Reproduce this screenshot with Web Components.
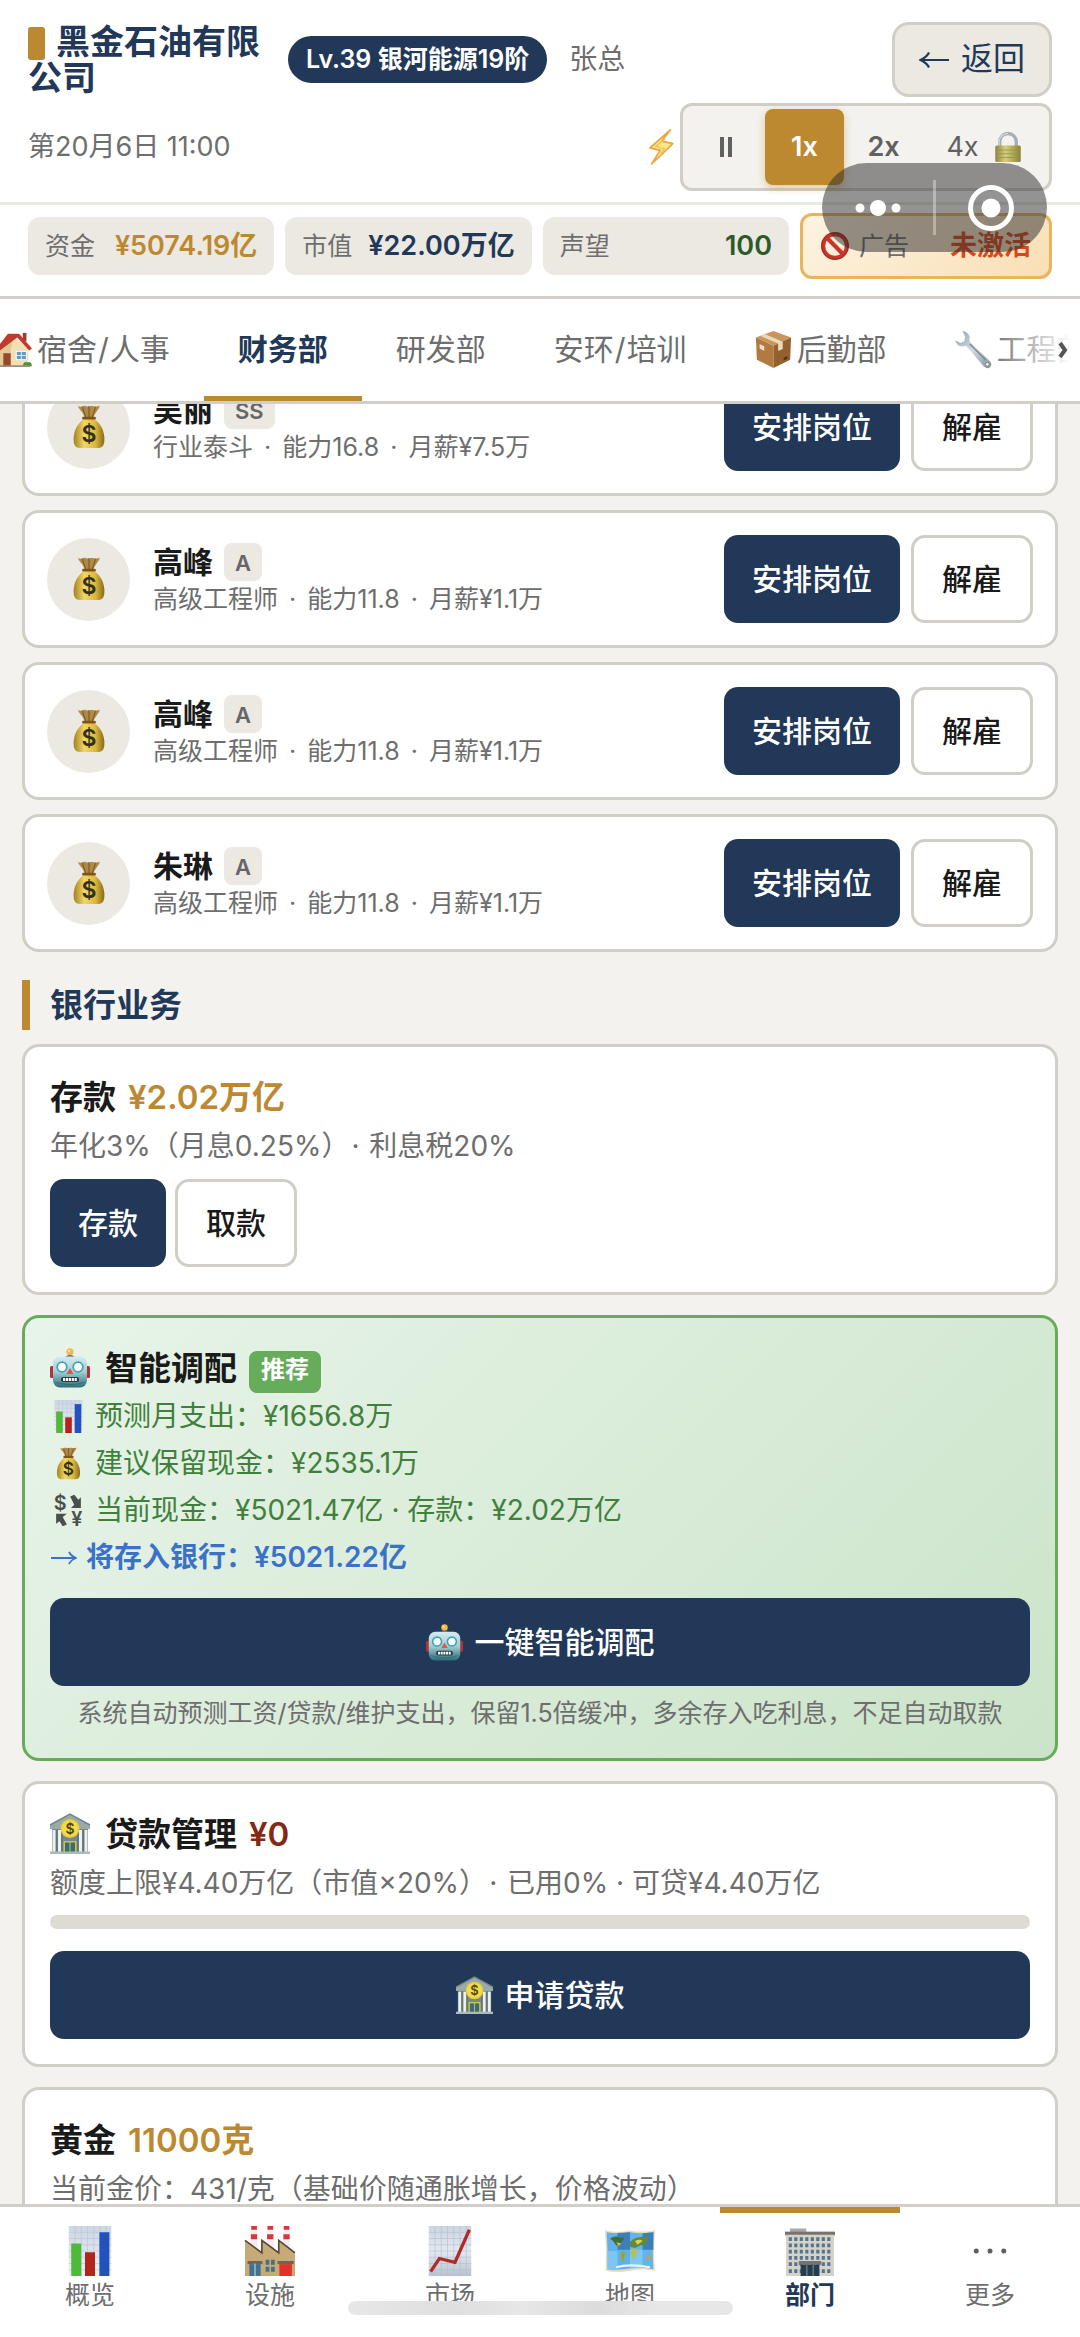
<!DOCTYPE html>
<html lang="zh-CN">
<head>
<meta charset="utf-8">
<meta name="viewport" content="width=device-width, initial-scale=1">
<title>黑金石油有限公司</title>
<style>
  :root {
    --navy: #223858;
    --gold: #bd8930;
    --ink: #1a1a1a;
    --muted: #6e6e6e;
    --line: #d0cec7;
    --sand: #ebe9e2;
    --paper: #f4f2ee;
  }
  * { box-sizing: border-box; }
  html, body { height: 100%; }
  body {
    margin: 0;
    background: var(--paper);
    color: var(--ink);
    font-family: Inter, "Noto Sans CJK SC", sans-serif;
    font-size: 28px;
    line-height: 1.4;
    text-spacing-trim: space-all;
  }
</style>
</head>
<body>
<game-app></game-app>

<script>
const base = '<style>*{box-sizing:border-box}button{font:inherit;color:inherit;cursor:pointer;margin:0}p,h1,h2,h3{margin:0;font-weight:inherit;font-size:inherit}.sep{margin:0 4px}</style>';

function define(name, html, setup) {
  const template = document.createElement('template');
  template.innerHTML = base + html;
  customElements.define(name, class extends HTMLElement {
    connectedCallback() {
      if (this.shadowRoot) return;
      this.attachShadow({ mode: 'open' }).append(template.content.cloneNode(true));
      if (setup) setup(this, this.shadowRoot);
    }
  });
}

/* ---------- pictograms, all on a 40 x 40 grid ---------- */
const icons = {
  bag: `<defs><linearGradient id="g"><stop offset="0" stop-color="#a5811f"/><stop offset=".35" stop-color="#f0d766"/><stop offset=".7" stop-color="#dcb93f"/><stop offset="1" stop-color="#8c6a18"/></linearGradient></defs>
    <path d="M10 1c3 2 4-1 7 0s4 0 6 0 5 1 7-.5c-1 4-5 7-6 11h-8c-1-5-5-7-6-10.5z" fill="#b08a45"/><path d="M14 2l3 9M20 1v10M26 2l-3 9" stroke="#7a5a22" stroke-width="1"/>
    <path d="M16 12h8c7 5 10 12 10 19 0 6-2 8-5 8H11c-3 0-5-2-5-8 0-7 3-14 10-19z" fill="url(#g)"/><path d="M15 12h10" stroke="#7b551c" stroke-width="2.5" stroke-linecap="round"/>
    <text x="20" y="34" text-anchor="middle" font-family="Inter,sans-serif" font-size="21" font-weight="600" fill="#33301c">$</text>`,
  robot: `<defs><linearGradient id="g" x2="0" y2="1"><stop offset="0" stop-color="#d5ecef"/><stop offset=".5" stop-color="#a2cdd2"/><stop offset="1" stop-color="#2c6b78"/></linearGradient></defs>
    <rect x="0" y="18" width="4" height="12" rx="1.5" fill="#b4303a"/><rect x="36" y="18" width="4" height="12" rx="1.5" fill="#b4303a"/>
    <path d="M15 9q5-4 10 0z" fill="#5b4a8a"/><circle cx="20" cy="3.8" r="3.5" fill="#f1b845"/><circle cx="19" cy="3" r="1.2" fill="#fce7a2"/>
    <rect x="3" y="8.5" width="34" height="31" rx="7" fill="url(#g)"/><path d="M5 34q15 5 30 0" stroke="#205461" stroke-width="1" fill="none" opacity=".5"/>
    <circle cx="12" cy="19" r="4.8" fill="#fff" stroke="#3da5b8" stroke-width="1.8"/><circle cx="28" cy="19" r="4.8" fill="#fff" stroke="#3da5b8" stroke-width="1.8"/>
    <path d="M20 20l3.5 6h-7z" fill="#e2574c"/><rect x="11" y="29" width="18" height="5" rx="2" fill="#273b42"/><path d="M13 31.5h14" stroke="#fff" stroke-width="3" stroke-dasharray="2.2 .7"/>`,
  bars: `<defs><linearGradient id="g" x2="0" y2="1"><stop offset="0" stop-color="#cdd6e3"/><stop offset="1" stop-color="#eef1f6"/></linearGradient></defs>
    <rect x="3" y="0" width="34" height="40" fill="url(#g)"/><path d="M3 5h34M3 10h34M3 15h34M3 20h34M3 25h34M3 30h34M3 35h34M8 0v40M13 0v40M18 0v40M23 0v40M28 0v40M33 0v40" stroke="#b9c4d4" stroke-width=".5"/>
    <rect x="5" y="14" width="8" height="26" fill="#4fb93a"/><rect x="16" y="21" width="8" height="19" fill="#b3241c"/><rect x="27.5" y="5" width="8" height="35" fill="#2352bd"/>`,
  trend: `<defs><linearGradient id="g" x2="0" y2="1"><stop offset="0" stop-color="#cbd5e0"/><stop offset=".5" stop-color="#e3e9f0"/><stop offset="1" stop-color="#b9c3d0"/></linearGradient></defs>
    <rect x="3" y="0" width="34" height="40" fill="url(#g)"/><path d="M3 5h34M3 10h34M3 15h34M3 20h34M3 25h34M3 30h34M3 35h34M8 0v40M13 0v40M18 0v40M23 0v40M28 0v40M33 0v40" stroke="#b3bfce" stroke-width=".5"/>
    <path d="M4.5 36.5L11.5 26l12.5 3L35.5 3" fill="none" stroke="#b02a26" stroke-width="2.6"/>`,
  factory: `<path d="M5 0h4.500l.8 20H4.200zM18 0h4.500l.8 20h-6.100zM31 0h4.500l.8 20h-6.100z" fill="#f3ecec"/>
    <path d="M5 0h4.500v3H5zM4.700 6.500h5v4h-5zM18 0h4.500v3H18zM17.700 6.500h5v4h-5zM31 0h4.500v3H31zM30.700 6.500h5v4h-5z" fill="#d8353c"/>
    <path d="M0 11l13.500 10V11L27 21V11l13 10v19H0z" fill="#c7aa76"/><path d="M0 11.500l13.500 10V11.500l13.500 10v-10l13 10" fill="none" stroke="#5a4636" stroke-width="1.3"/>
    <rect x="2" y="28" width="12" height="2.5" fill="#6d6657"/><rect x="3.5" y="30.5" width="9" height="9.5" fill="#3e7192"/><path d="M8 30v10" stroke="#b9cbd2" stroke-width="1"/>
    <path d="M16.500 27h3v4h-3zM20.800 27h3v4h-3zM16.500 32.500h3v4h-3zM20.800 32.500h3v4h-3z" fill="#43718c"/><rect x="26" y="28" width="13" height="2.5" fill="#6d6657"/><rect x="27.5" y="30.5" width="10" height="9.5" fill="#e0312b"/>`,
  map: `<path d="M0 3.500q10 2 20 0 10 2 20-.2-1.500 18 0 32.500-10-2.500-20 0-10 2-19.500 0Q1.500 20 0 3.500z" fill="#eed9bd"/>
    <path d="M1.300 5q9 1.500 18.700 0v29q-9.500 1.500-18 .5Q2.500 20 1.300 5z" fill="#5fb1e8"/><path d="M20 5q10 1.500 18.700 0-1 15 0 29.500-9.500-2-18.700-.5z" fill="#64b4ea"/>
    <path d="M10 5.500l10-.5v14H10zM30 5.800L38.700 5v14H30z" fill="#3d7fb8"/><path d="M1.500 20H10v14.500H2zM20 19h10v14.500l-10 .5z" fill="#85cbf5" opacity=".8"/>
    <path d="M4 10q5-3 8-.5 4-1 3 1-2 2-3 4l-3 1-2-3z" fill="#3f6d3f"/><path d="M9 13l4 1-2 2z" fill="#d3c637"/><path d="M13 20l3.500 1.500-1 4-1.500 4-1.500-5z" fill="#8faa3c"/>
    <path d="M20 13q3-4 8-4 6-2 7 2l-4 4-3 .5-4 2-4-1z" fill="#608b3c"/><path d="M24 12q4-2 6 0l-4 3z" fill="#ddd35a"/><path d="M21 18l5 .5-2 6-1.500 2-1.500-4z" fill="#b9c04c"/><path d="M33 24l3.500.5v2.500l-3-.5z" fill="#d69b45"/><path d="M9 33q10-3 27 0" stroke="#e8f4f9" stroke-width="1.8" fill="none"/>`,
  office: `<rect x="4" y="2" width="13" height="3" fill="#aaa"/><rect x="0" y="4.5" width="40" height="3" fill="#77736e"/><rect x=".8" y="7" width="38.4" height="33" fill="#d5d2ca"/>
    <path d="M3 10.500h34M3 15.500h34M3 20.500h34M3 25.500h34M3 30.500h34M3 36h34" stroke="#53738f" stroke-width="3" stroke-dasharray="2.5 1.9"/>
    <rect x="11" y="28" width="18" height="3" fill="#77736c"/><rect x="12.5" y="31" width="15" height="9" fill="#263d4e"/><path d="M17.500 31v9M22.500 31v9" stroke="#8194a0" stroke-width=".8"/>`,
  bank: `<path d="M0 15v-4L20 0l20 11v4z" fill="#9ba9a9"/><path d="M0 11L20 0l20 11" fill="none" stroke="#74858a" stroke-width="1.5"/><rect x="2" y="15" width="36" height="23" fill="#75888b"/>
    <path d="M4 16v22M9.500 16v22M30.500 16v22M36 16v22" stroke="#eef0ef" stroke-width="3"/><path d="M6.800 16v22M12 16v22M28 16v22M33.300 16v22" stroke="#5d7175" stroke-width="1.2"/>
    <rect x="13.5" y="27" width="13" height="12" fill="#d2c246"/><rect x="15" y="28.5" width="10" height="10" fill="#386b7d"/><path d="M20 28v11" stroke="#d2c246" stroke-width="1"/><rect x="0" y="37.5" width="40" height="2.5" fill="#aeb9b9"/>
    <circle cx="20" cy="14.5" r="9.5" fill="#e9cd35"/><circle cx="20" cy="14.5" r="8" fill="#f3dc4b"/><text x="20" y="19.5" text-anchor="middle" font-family="Inter,sans-serif" font-size="14" font-weight="600" fill="#54480f">$</text>`,
  exchange: `<g fill="#4a4f4c" font-family="Inter,sans-serif" font-weight="600" font-size="24" text-anchor="middle"><text x="10" y="19">$</text><text x="30" y="39">¥</text></g>
    <path d="M22 3l5-2 5 6 3-3v13H23l4-4z" fill="#4a4f4c"/><path d="M18 37l-5 2-4-6-4 3V24h13l-5 4z" fill="#4a4f4c"/>`,
  house: `<path d="M30 2h4v9h-4z" fill="#9b4031"/><path d="M4 19L20 5l16 14v19H4z" fill="#f3dfb3"/><path d="M20 6l-10 12-8 2v18h15V20z" fill="#e3c794"/><path d="M0 21L14 3h12l14 16-3 2L24 7 3 23z" fill="#bf3a2f"/>
    <rect x="9" y="24" width="8" height="14" fill="#97492e"/><rect x="23" y="22" width="11" height="9" fill="#5ba0cf" stroke="#fff" stroke-width="1"/><path d="M28.500 22v9M23 26.500h11" stroke="#fff" stroke-width=".8"/><path d="M30 38q1-6 5-4 4-2 5 4z" fill="#4f9138"/><path d="M2 38h36" stroke="#99917d" stroke-width="2"/>`,
  box: `<path d="M20 0l19 7-19 9L1 7z" fill="#c9955a"/><path d="M1 7l19 9v24L2 31z" fill="#b27a40"/><path d="M39 7l-19 9v24l18-9z" fill="#93602e"/><path d="M11 3.500L30 11.500v8l-5 2v-8L6 5.500z" fill="#ead9bd"/><path d="M5 14l5 2.500v5L5 19z" fill="#e6e0d6"/><path d="M31 29l4-2v3l-4 2z" fill="#4c3520"/>`,
  wrench: `<defs><linearGradient id="g" x2="1" y2="1"><stop offset="0" stop-color="#8da0ae"/><stop offset=".5" stop-color="#d3dbe0"/><stop offset="1" stop-color="#7d8e99"/></linearGradient></defs>
    <path d="M8 0q7 1 8 7-.5 3 0 5l21 20q4 4 1 7t-7-1L12 16q-9 3-12-6l6 3 4-2 1-5z" fill="url(#g)"/><path d="M16 14l17 17" stroke="#778893" stroke-width="1.5"/><circle cx="35" cy="36" r="2" fill="#fff" stroke="#71808a"/>`,
  ban: `<circle cx="20" cy="20" r="17" fill="none" stroke="#c8362b" stroke-width="6"/><path d="M8 8l24 24" stroke="#c8362b" stroke-width="6"/><circle cx="20" cy="20" r="19" fill="none" stroke="#8f2118" stroke-width="1"/>`,
  bolt: `<path d="M31 0L7 21l12 3L9 40l25-24-13-3z" fill="#fbe68b" stroke="#eda640" stroke-width="2" stroke-linejoin="round"/><path d="M25 10L14 19l10 3-6 9" fill="none" stroke="#f5c14f" stroke-width="1.5"/>`,
  lock: `<defs><linearGradient id="g"><stop offset="0" stop-color="#8b8640"/><stop offset=".4" stop-color="#d4ce7e"/><stop offset="1" stop-color="#8b8234"/></linearGradient></defs>
    <path d="M9 20v-7a11 11 0 0122 0v7" fill="none" stroke="#a7aeb6" stroke-width="4.5"/><path d="M8 19v-6a12 12 0 0112-11" fill="none" stroke="#dce1e6" stroke-width="1.5"/><rect x="3" y="18" width="34" height="22" rx="2" fill="url(#g)"/><path d="M4 24h32M4 29h32M4 34h32" stroke="#969047" stroke-width="1"/>`,
  dots: `<g fill="#5f5f5f"><circle cx="9" cy="20" r="2"/><circle cx="20" cy="20" r="2"/><circle cx="31" cy="20" r="2"/></g>`
};
define('emoji-icon', `<style>
  :host { display: inline-block; flex: none; width: var(--icon, 32px); height: var(--icon, 32px); vertical-align: middle; }
  svg { display: block; width: 100%; height: 100%; overflow: visible; }
</style><svg viewBox="0 0 40 40" aria-hidden="true"></svg>`, (el, root) => {
  root.querySelector('svg').innerHTML = icons[el.getAttribute('name')] || '';
});

/* ---------- button ---------- */
define('ui-button', `<style>
  :host { display: inline-flex; }
  :host([wide]) { display: flex; }
  button { display: flex; align-items: center; justify-content: center; gap: 12px; width: 100%; height: 88px; padding: 0 28px; border: 0; border-radius: 14px;
    background: var(--navy); color: #fff; font-size: 30px; font-weight: 500; line-height: 42px; white-space: nowrap; }
  :host([plain]) button { background: #fff; color: var(--ink); border: 3px solid var(--line); }
</style><button type="button"><slot></slot></button>`);

/* ---------- header ---------- */
define('speed-control', `<style>
  :host { display: flex; align-items: center; gap: 2px; }
  emoji-icon { --icon: 34px; }
  .group { display: flex; align-items: stretch; height: 88px; padding: 3px; border: 3px solid var(--line); border-radius: 12px; background: var(--paper); }
  button { display: flex; align-items: center; justify-content: center; gap: 14px; width: 79px; border: 0; border-radius: 8px; background: none; color: #606060; font-size: 27px; font-weight: 600; padding: 0; }
  button[aria-pressed=true] { background: var(--gold); color: #fff; box-shadow: 0 3px 8px rgba(189,137,48,.4); }
  button.locked { width: 123px; font-weight: 400; }
  button.locked emoji-icon { --icon: 30px; }
  .pause { display: flex; gap: 4px; }
  .pause::before, .pause::after { content: ""; width: 4px; height: 20px; background: #606060; }
</style>
<emoji-icon name="bolt"></emoji-icon>
<div class="group" role="group" aria-label="速度">
  <button type="button" aria-label="暂停"><span class="pause"></span></button>
  <button type="button" aria-pressed="true">1x</button>
  <button type="button">2x</button>
  <button type="button" class="locked">4x<emoji-icon name="lock"></emoji-icon></button>
</div>`);

define('stat-pill', `<style>
  :host { display: flex; align-items: center; justify-content: space-between; gap: 8px; height: 58px; padding: 0 17px; border-radius: 12px; background: var(--sand);
    font-size: 25px; white-space: nowrap; color: var(--navy); }
  :host([tone=gold]) { color: var(--gold); }
  :host([tone=green]) { color: #2d5a27; }
  :host([tone=alert]) { height: 66px; padding: 0 18px; border: 3px solid #eab45f; background: linear-gradient(135deg, #fdf3e2, #f9dfb4); color: #d9481c; }
  .label { display: flex; align-items: center; gap: 10px; color: var(--muted); }
  b { font-size: 27px; font-weight: 600; }
</style><span class="label"><slot name="label"></slot></span><b><slot></slot></b>`);

define('app-header', `<style>
  :host { display: block; background: #fff; }
  .top { padding: 22px 28px 11px; border-bottom: 3px solid #e9e8e2; display: grid; gap: 6px; }
  .row { display: flex; align-items: center; justify-content: space-between; }
  .who { display: flex; align-items: center; flex: 1; min-width: 0; }
  h1 { flex: 0 1 249px; font-size: 34px; line-height: 36px; font-weight: 700; color: var(--navy); margin-right: 11px; }
  .mark { display: inline-block; width: 17px; height: 33px; border-radius: 3px; background: var(--gold); vertical-align: -6px; margin-right: 11px; }
  .level { height: 47px; padding: 0 18px; border-radius: 24px; background: var(--navy); color: #fff; font-size: 25px; line-height: 46px; font-weight: 600; white-space: nowrap; }
  .user { margin-left: 22px; color: var(--muted); }
  .back { display: flex; align-items: center; gap: 12px; height: 75px; padding: 0 24px; border: 3px solid var(--line); border-radius: 17px; background: var(--sand); color: var(--navy); font-size: 32px; }
  .back svg { width: 30px; height: 18px; }
  time { color: var(--muted); font-size: 27px; }
  .stats { display: grid; grid-template-columns: repeat(3, 1fr) auto; align-items: center; gap: 11px; padding: 8px 28px 17px; border-bottom: 3px solid var(--line); }
  stat-pill[tone=alert] { min-width: 252px; }
  emoji-icon { --icon: 28px; }
</style>
<div class="top">
  <div class="row">
    <div class="who">
      <h1><span class="mark"></span>黑金石油有限公司</h1>
      <span class="level">Lv.39 银河能源19阶</span>
      <span class="user">张总</span>
    </div>
    <button class="back" type="button"><svg viewBox="0 0 30 18" fill="none" stroke="currentColor" stroke-width="2.2"><path d="M30 9H2M10 1.500Q8 6 1.500 9 8 12 10 16.500"/></svg>返回</button>
  </div>
  <div class="row">
    <time>第20月6日 11:00</time>
    <speed-control></speed-control>
  </div>
</div>
<div class="stats">
  <stat-pill tone="gold"><span slot="label">资金</span>¥5074.19亿</stat-pill>
  <stat-pill><span slot="label">市值</span>¥22.00万亿</stat-pill>
  <stat-pill tone="green"><span slot="label">声望</span>100</stat-pill>
  <stat-pill tone="alert"><emoji-icon slot="label" name="ban"></emoji-icon><span slot="label">广告</span>未激活</stat-pill>
</div>`);

/* ---------- floating capsule of the host app ---------- */
define('host-capsule', `<style>
  :host { position: absolute; z-index: 3; top: 163px; right: 33px; display: block; width: 225px; height: 89px; border-radius: 45px; background: rgba(40,40,40,.5); }
  svg { display: block; width: 100%; height: 100%; }
</style><svg viewBox="0 0 225 89" role="img" aria-label="菜单">
  <g fill="#fff"><circle cx="38" cy="45" r="4.5"/><circle cx="56" cy="45" r="8"/><circle cx="74" cy="45" r="4.5"/><circle cx="169" cy="45" r="9.5"/></g>
  <path d="M112.500 17v55" stroke="#fff" stroke-opacity=".35" stroke-width="3"/><circle cx="169" cy="45" r="20.5" fill="none" stroke="#fff" stroke-width="5"/></svg>`);

/* ---------- department tabs ---------- */
define('dept-tabs', `<style>
  :host { display: block; position: relative; background: #fff; border-bottom: 3px solid var(--line); }
  nav { display: flex; overflow-x: auto; scrollbar-width: none; }
  button { display: flex; align-items: center; flex: none; gap: 5px; height: 102px; padding: 3px 34px 0; border: 0; border-bottom: 5px solid transparent; background: none; font-size: 30px; line-height: 42px; color: var(--muted); white-space: nowrap; }
  button[aria-current] { color: var(--navy); font-weight: 700; border-color: var(--gold); }
  emoji-icon { --icon: 37px; }
  .slash { margin: 0 1px; }
  .more { position: absolute; inset: 0 0 0 auto; width: 90px; display: flex; align-items: center; justify-content: flex-end; padding-right: 12px; pointer-events: none;
    background: linear-gradient(90deg, rgba(255,255,255,0), #fff 90%); }
</style>
<nav>
  <button type="button"><emoji-icon name="house"></emoji-icon><span>宿舍<span class="slash">/</span>人事</span></button>
  <button type="button" aria-current="page">财务部</button>
  <button type="button">研发部</button>
  <button type="button"><span>安环<span class="slash">/</span>培训</span></button>
  <button type="button"><emoji-icon name="box"></emoji-icon>后勤部</button>
  <button type="button"><emoji-icon name="wrench"></emoji-icon>工程部</button>
</nav>
<span class="more"><svg width="10" height="16" viewBox="0 0 10 16"><path d="M2 1l5 7-5 7" fill="none" stroke="#555" stroke-width="4"/></svg></span>`, (el, root) => {
  const nav = root.querySelector('nav');
  requestAnimationFrame(() => { nav.scrollLeft = nav.children[1].offsetLeft - 204; });
});

/* ---------- staff ---------- */
define('staff-card', `<style>
  :host { display: flex; align-items: center; gap: 11px; height: 138px; padding: 0 22px; border: 3px solid var(--line); border-radius: 17px; background: #fff; }
  .face { display: grid; place-items: center; flex: none; width: 83px; height: 83px; margin-right: 12px; border-radius: 50%; background: var(--sand); }
  emoji-icon { --icon: 44px; }
  .info { flex: 1; min-width: 0; }
  .name { display: flex; align-items: center; gap: 11px; font-size: 30px; line-height: 40px; font-weight: 700; }
  .grade { height: 38px; padding: 0 11px; border-radius: 8px; background: var(--sand); color: #666; font-size: 22px; line-height: 40px; font-weight: 600; }
  p { font-size: 25px; line-height: 34px; color: var(--muted); }
</style>
<span class="face"><emoji-icon name="bag"></emoji-icon></span>
<div class="info"><div class="name"><slot name="name"></slot><span class="grade"><slot name="grade"></slot></span></div><p><slot></slot></p></div>
<ui-button>安排岗位</ui-button>
<ui-button plain>解雇</ui-button>`);

/* ---------- finance panels ---------- */
define('section-title', `<style>
  :host { display: block; }
  h2 { padding-left: 20px; border-left: 8px solid var(--gold); color: var(--navy); font-size: 33px; line-height: 50px; font-weight: 700; }
</style><h2><slot></slot></h2>`);

define('info-panel', `<style>
  :host { display: block; padding: 25px; border: 3px solid var(--line); border-radius: 17px; background: #fff; }
  :host([tone=green]) { border-color: #67ac5b; background: linear-gradient(135deg, #e8f4e9, #cbe4c9); }
  h3 { display: flex; align-items: center; gap: 12px; font-size: 33px; line-height: 50px; font-weight: 700; white-space: nowrap; }
</style><h3><slot name="title"></slot></h3><slot></slot>`);

define('bank-section', `<style>
  :host { display: grid; gap: 20px; }
  .amount { color: var(--gold); font-weight: 600; }
  .debt { color: #842a14; font-weight: 600; }
  p { font-size: 28px; color: var(--muted); line-height: 48px; }
  .sep { margin: 0 2px; }
  .actions { display: flex; gap: 9px; padding-top: 9px; }
  .tag { height: 42px; margin-top: 8px; padding: 0 12px; border-radius: 8px; background: #67ac5b; color: #fff; font-size: 24px; line-height: 38px; font-weight: 700; }
  emoji-icon { --icon: 40px; }
  emoji-icon[slot=title] { margin-right: 3px; }
  ui-button emoji-icon { --icon: 37px; }
  .lines { display: grid; padding-bottom: 17px; }
  .lines p { display: flex; align-items: center; gap: 10px; line-height: 47px; color: #40803c; padding-left: 2px; }
  .lines emoji-icon { --icon: 33px; }
  .lines .result { color: #3a72c9; font-weight: 600; gap: 9px; padding-left: 1px; }
  .note { font-size: 25px; line-height: 40px; text-align: center; padding-top: 7px; }
  .arrow { width: 26px; height: 14px; }
  progress { display: block; width: 100%; height: 14px; margin: 8px 0 22px; border: 0; border-radius: 7px; overflow: hidden; appearance: none; background: #dedbd5; }
  progress::-webkit-progress-bar { background: #dedbd5; }
  progress::-webkit-progress-value { background: var(--gold); }
</style>
<info-panel>
  <span slot="title">存款</span><span slot="title" class="amount">¥2.02万亿</span>
  <p>年化3%（月息0.25%）<span class="sep">·</span> 利息税20%</p>
  <div class="actions"><ui-button>存款</ui-button><ui-button plain>取款</ui-button></div>
</info-panel>
<info-panel tone="green">
  <emoji-icon slot="title" name="robot"></emoji-icon><span slot="title">智能调配</span><span slot="title" class="tag">推荐</span>
  <div class="lines">
    <p><emoji-icon name="bars"></emoji-icon>预测月支出：¥1656.8万</p>
    <p><emoji-icon name="bag"></emoji-icon>建议保留现金：¥2535.1万</p>
    <p><emoji-icon name="exchange"></emoji-icon><span>当前现金：¥5021.47亿 · 存款：¥2.02万亿</span></p>
    <p class="result"><svg class="arrow" viewBox="0 0 26 14" fill="none" stroke="currentColor" stroke-width="1.8"><path d="M0 7h24M18 1q2 4 7 6-5 2-7 6"/></svg>将存入银行：¥5021.22亿</p>
  </div>
  <ui-button wide><emoji-icon name="robot"></emoji-icon>一键智能调配</ui-button>
  <p class="note">系统自动预测工资/贷款/维护支出，保留1.5倍缓冲，多余存入吃利息，不足自动取款</p>
</info-panel>
<info-panel>
  <emoji-icon slot="title" name="bank"></emoji-icon><span slot="title">贷款管理</span><span slot="title" class="debt">¥0</span>
  <p>额度上限¥4.40万亿（市值×20%）<span class="sep">·</span> 已用0% · 可贷¥4.40万亿</p>
  <progress max="100" value="0" aria-label="已用额度"></progress>
  <ui-button wide><emoji-icon name="bank"></emoji-icon>申请贷款</ui-button>
</info-panel>
<info-panel>
  <span slot="title">黄金</span><span slot="title" class="amount">11000克</span>
  <p>当前金价：431/克（基础价随通胀增长，价格波动）</p>
  <div class="actions"><ui-button>买入</ui-button><ui-button plain>卖出</ui-button></div>
</info-panel>`);

/* ---------- bottom navigation ---------- */
define('nav-item', `<style>
  :host { display: block; flex: 1; }
  a { display: flex; flex-direction: column; align-items: center; gap: 3px; height: 100%; padding-top: 13px; border-top: 6px solid transparent; color: var(--muted); font-size: 25px; line-height: 32px; text-decoration: none; }
  :host([active]) a { border-color: var(--gold); color: var(--navy); font-weight: 700; }
  emoji-icon { --icon: 50px; }
</style><a href="#"><slot></slot></a>`, (el, root) => {
  const icon = document.createElement('emoji-icon');
  icon.setAttribute('name', el.getAttribute('icon'));
  root.querySelector('a').prepend(icon);
});

define('bottom-nav', `<style>
  :host { display: block; position: relative; background: #fff; border-top: 3px solid var(--line); }
  nav { display: flex; height: 130px; }
  .home { position: absolute; left: 50%; bottom: 22px; width: 385px; height: 14px; margin-left: -192px; border-radius: 7px; background: linear-gradient(90deg, #e7e7e7, #dfdfdf 28%, #e7e7e7 45%, #dcdcdc 65%, #e7e7e7 80%); }
</style>
<nav>
  <nav-item icon="bars">概览</nav-item>
  <nav-item icon="factory">设施</nav-item>
  <nav-item icon="trend">市场</nav-item>
  <nav-item icon="map">地图</nav-item>
  <nav-item icon="office" active>部门</nav-item>
  <nav-item icon="dots">更多</nav-item>
</nav>
<span class="home"></span>`);

/* ---------- app shell ---------- */
define('game-app', `<style>
  :host { display: flex; flex-direction: column; height: 100vh; position: relative; overflow: hidden; }
  main { flex: 1; min-height: 0; overflow-y: auto; scrollbar-width: none; padding: 0 22px 30px; }
  .staff { display: grid; gap: 14px; }
  section-title { margin: 28px 0 14px; }
</style>
<app-header></app-header>
<host-capsule></host-capsule>
<dept-tabs></dept-tabs>
<main>
  <div class="staff">
    <staff-card><span slot="name">吴丽</span><span slot="grade">SS</span>行业泰斗 <span class="sep">·</span> 能力16.8 <span class="sep">·</span> 月薪¥7.5万</staff-card>
    <staff-card><span slot="name">高峰</span><span slot="grade">A</span>高级工程师 <span class="sep">·</span> 能力11.8 <span class="sep">·</span> 月薪¥1.1万</staff-card>
    <staff-card><span slot="name">高峰</span><span slot="grade">A</span>高级工程师 <span class="sep">·</span> 能力11.8 <span class="sep">·</span> 月薪¥1.1万</staff-card>
    <staff-card><span slot="name">朱琳</span><span slot="grade">A</span>高级工程师 <span class="sep">·</span> 能力11.8 <span class="sep">·</span> 月薪¥1.1万</staff-card>
  </div>
  <section-title>银行业务</section-title>
  <bank-section></bank-section>
</main>
<bottom-nav></bottom-nav>`, (el, root) => {
  requestAnimationFrame(() => { root.querySelector('main').scrollTop = 46; });
});
</script>
</body>
</html>
